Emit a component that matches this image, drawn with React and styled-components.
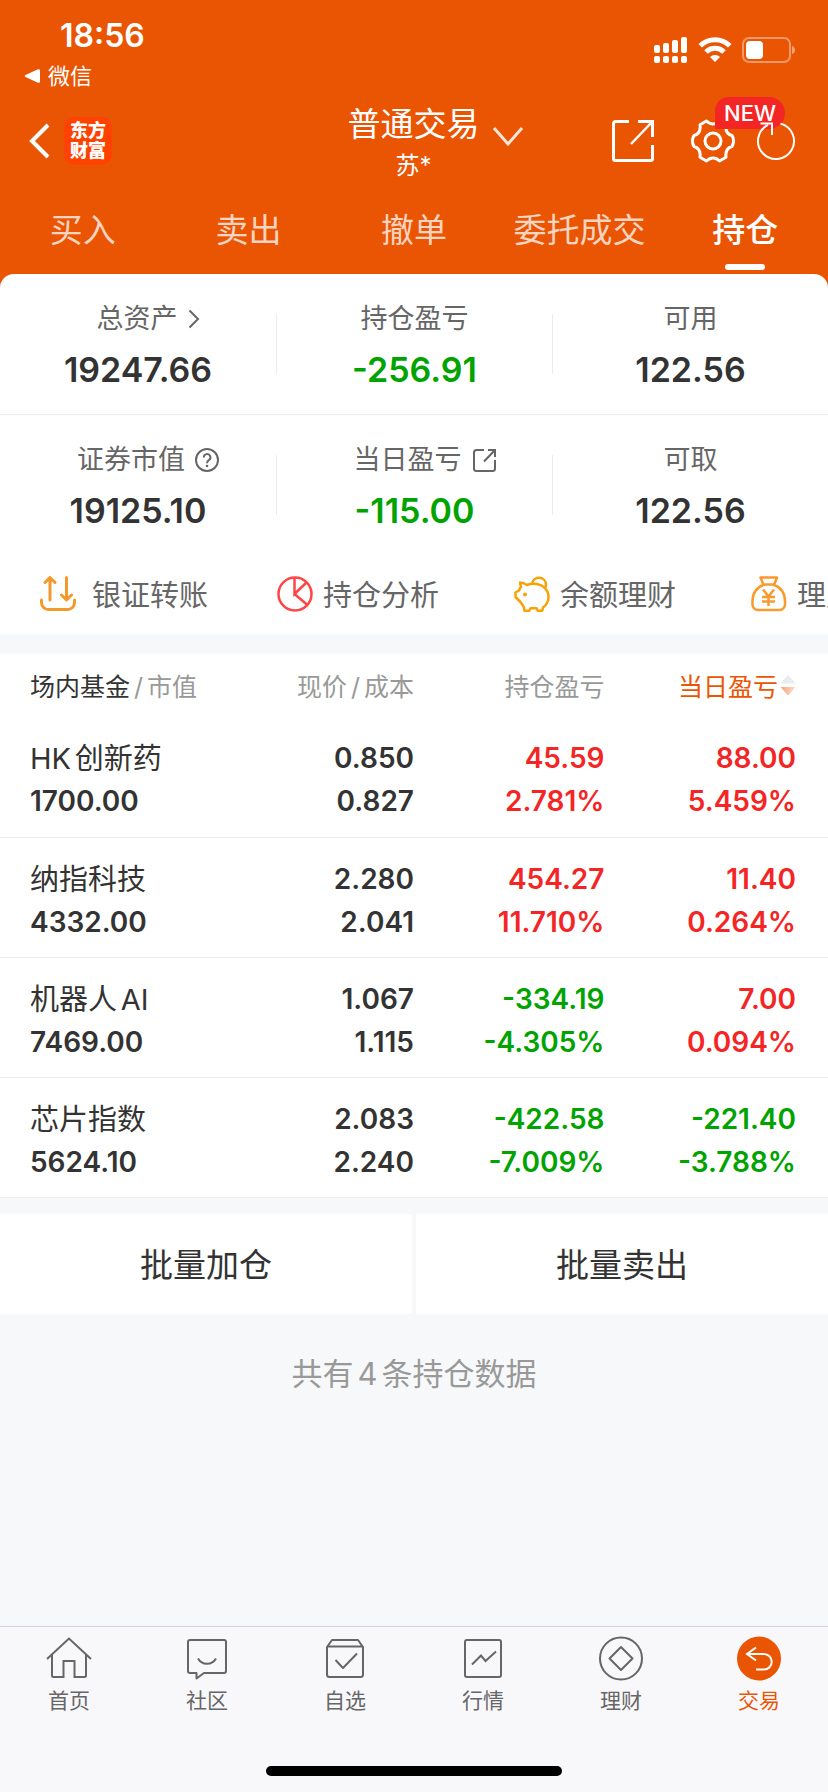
import React, { useState } from "react";
import styled, { createGlobalStyle } from "styled-components";

const GlobalStyle = createGlobalStyle`
  * {
    box-sizing: border-box;
  }
  body {
    margin: 0;
    background: #f7f8fa;
    color: #333;
    font-family: Inter, "Noto Sans CJK SC", sans-serif;
    text-autospace: normal;
  }
  button {
    padding: 0;
    border: 0;
    background: none;
    color: inherit;
    font: inherit;
    cursor: pointer;
  }
  a {
    color: inherit;
    text-decoration: none;
  }
  svg {
    display: block;
    flex: none;
  }
`;

const RED = "#f42525";
const GREEN = "#00a300";
const ORANGE = "#ea5504";

const toneColor = ($tone) =>
  $tone === "up" ? RED : $tone === "down" ? GREEN : "#333";

const Page = styled.div`
  min-height: 100vh;
  display: flex;
  flex-direction: column;
  overflow-x: hidden;
`;

const Header = styled.header`
  background: ${ORANGE};
  color: #fff;
`;

const StatusBar = styled.div`
  height: 96px;
  padding: 16px 32px 0 24px;
  display: flex;
  justify-content: space-between;
`;

const Clock = styled.div`
  padding-left: 36px;
  font-size: 32px;
  line-height: 40px;
  font-weight: 600;
`;

const BackToApp = styled.a`
  display: flex;
  align-items: center;
  gap: 8px;
  font-size: 22px;
  line-height: 40px;
`;

const StatusIcons = styled.div`
  height: 68px;
  display: flex;
  align-items: center;
  gap: 10px;
`;

const NavBar = styled.div`
  height: 90px;
  padding: 0 32px 0 28px;
  display: grid;
  grid-template-columns: 1fr auto 1fr;
  align-items: center;
`;

const NavLeft = styled.div`
  display: flex;
  align-items: center;
  gap: 14px;
`;

const Logo = styled.div`
  width: 48px;
  height: 48px;
  border-radius: 10px;
  background: #ff4200;
  display: grid;
  place-content: center;
  font-size: 18px;
  line-height: 20px;
  font-weight: 900;
`;

const Account = styled.button`
  padding: 6px 0 0 47px;
  display: flex;
  align-items: center;
  gap: 12px;

  svg {
    margin-bottom: 14px;
  }
`;

const AccountText = styled.span`
  display: flex;
  flex-direction: column;
  align-items: center;
`;

const AccountTitle = styled.span`
  font-size: 33px;
  line-height: 44px;
`;

const AccountUser = styled.span`
  font-size: 24px;
  line-height: 40px;
`;

const NavRight = styled.div`
  display: flex;
  align-items: center;
  justify-content: flex-end;
`;

const IconButton = styled.button`
  position: relative;
  margin-left: ${(p) => p.$gap || 0}px;
`;

const NewBadge = styled.span`
  position: absolute;
  left: 24px;
  top: -22px;
  height: 32px;
  padding: 0 9px;
  border-radius: 14px 16px 16px 0;
  background: ${RED};
  font-size: 22px;
  line-height: 32px;
  font-weight: 500;
`;

const Tabs = styled.nav`
  height: 88px;
  display: grid;
  grid-template-columns: repeat(5, 1fr);
`;

const Tab = styled.a`
  padding: 20px 0 4px;
  display: flex;
  flex-direction: column;
  align-items: center;
  justify-content: space-between;
  font-size: 33px;
  line-height: 48px;
  font-weight: ${(p) => (p.$active ? 500 : 400)};
  color: ${(p) => (p.$active ? "#fff" : "rgba(255, 255, 255, 0.75)")};

  &::after {
    content: "";
    width: 40px;
    height: 6px;
    border-radius: 3px;
    background: ${(p) => (p.$active ? "#fff" : "transparent")};
  }
`;

const SummaryWrap = styled.div`
  background: ${ORANGE};
`;

const Summary = styled.section`
  border-radius: 14px 14px 0 0;
  background: #fff;
  overflow: hidden;
`;

const StatRow = styled.div`
  height: 140px;
  display: grid;
  grid-template-columns: repeat(3, 1fr);
  align-items: center;

  & + & {
    border-top: 1px solid #ebebeb;
  }
`;

const Stat = styled.div`
  height: 60px;
  padding-top: 2px;
  display: flex;
  flex-direction: column;
  align-items: center;
  justify-content: center;
  border-left: 1px solid #ececec;

  &:first-child {
    border-left: 0;
  }
`;

const StatLabel = styled.div`
  padding-left: ${(p) => (p.$hasIcon ? 20 : 0)}px;
  display: flex;
  align-items: center;
  gap: 10px;
  font-size: 27px;
  line-height: 50px;
  color: #666;
`;

const StatValue = styled.div`
  font-size: 34px;
  line-height: 52px;
  font-weight: 600;
  color: ${(p) => toneColor(p.$tone)};
`;

const Shortcuts = styled.nav`
  height: 80px;
  padding-left: 40px;
  display: flex;
  gap: 69px;
  overflow: hidden;
`;

const Shortcut = styled.a`
  min-width: 168px;
  display: flex;
  align-items: center;
  gap: 10px;
  font-size: 29px;
  color: #666;
  white-space: nowrap;
`;

const ShortcutLabel = styled.span`
  padding-bottom: 2px;
`;

const Holdings = styled.section`
  margin-top: 20px;
  background: #fff;
`;

const HoldingTable = styled.table`
  width: 100%;
  table-layout: fixed;
  border-collapse: collapse;
  text-align: right;

  th:first-child,
  td:first-child {
    width: 30%;
    padding-left: 30px;
    text-align: left;
  }
  th:nth-child(2) {
    width: 20%;
  }
  th:nth-child(3) {
    width: 23%;
  }
  th:last-child,
  td:last-child {
    width: 27%;
    padding-right: 32px;
  }
`;

const HeadCell = styled.th`
  height: 63px;
  padding: 0 0 2px;
  font-size: 25px;
  font-weight: 400;
  color: #999;
  white-space: nowrap;
`;

const Strong = styled.span`
  color: #333;
`;

const Slash = styled.span`
  padding: 0 4px;
`;

const SortButton = styled.button`
  display: inline-flex;
  align-items: center;
  gap: 2px;
  color: ${ORANGE};
`;

const HoldingRow = styled.tr`
  border-bottom: 1px solid #ebebeb;
`;

const Cell = styled.td`
  height: 120px;
  padding: 7px 0 0;
  font-size: 28px;
  line-height: 43px;
  font-weight: 600;
  color: ${(p) => toneColor(p.$tone)};
  white-space: nowrap;
`;

const Line = styled.div`
  height: 43px;
`;

const FundName = styled(Line)`
  font-size: 29px;
  font-weight: 400;
`;

const BatchActions = styled.div`
  margin-top: 16px;
  display: grid;
  grid-template-columns: 1fr 1fr;
  gap: 4px;
`;

const BatchButton = styled.button`
  && {
    height: 100px;
    padding-bottom: 2px;
    background: #fff;
    font-size: 33px;
  }
`;

const CountNote = styled.p`
  margin: 36px 0;
  text-align: center;
  font-size: 31px;
  line-height: 48px;
  color: #999;
`;

const BottomBar = styled.footer`
  height: 166px;
  margin-top: auto;
  padding-bottom: 16px;
  display: flex;
  flex-direction: column;
  align-items: center;
  justify-content: space-between;
  border-top: 1px solid #d5d6d9;
  background: #f8f8fb;
`;

const BottomNav = styled.nav`
  width: 100%;
  display: grid;
  grid-template-columns: repeat(6, 1fr);
`;

const BottomLink = styled.a`
  padding-top: 9px;
  display: flex;
  flex-direction: column;
  align-items: center;
  gap: 3px;
  font-size: 21px;
  line-height: 32px;
  color: ${(p) => (p.$active ? ORANGE : "#666")};
`;

const HomeIndicator = styled.div`
  width: 296px;
  height: 10px;
  border-radius: 5px;
  background: #000;
`;

const Icon = ({ w, h, sw = 2, children, ...rest }) => (
  <svg
    width={w}
    height={h}
    viewBox={`0 0 ${w} ${h}`}
    fill="none"
    stroke="currentColor"
    strokeWidth={sw}
    aria-hidden="true"
    {...rest}
  >
    {children}
  </svg>
);

const SignalIcon = () => (
  <Icon w={34} h={26} fill="#fff" stroke="none">
    {[0, 9, 18, 27].map((x, i) => (
      <g key={x}>
        <rect x={x} y={[8, 6, 3, 0][i]} width="6" height={[8, 10, 13, 16][i]} rx="2" />
        <rect x={x} y="19" width="6" height="7" rx="2" />
      </g>
    ))}
  </Icon>
);

const WifiIcon = () => (
  <Icon w={34} h={26} sw={5}>
    <path d="M2.2 8.8a21 21 0 0 1 29.6 0" />
    <path d="M8 15a12.8 12.8 0 0 1 18 0" />
    <path d="M17 25l-5-5a7.3 7.3 0 0 1 10 0z" fill="#fff" stroke="none" />
  </Icon>
);

const BatteryIcon = () => (
  <Icon w={54} h={26}>
    <rect x="1" y="1" width="47" height="24" rx="6" opacity="0.4" />
    <rect x="4" y="4" width="17" height="18" rx="4" fill="#fff" stroke="none" />
    <path d="M50 9c4 1 4 7 0 8z" fill="#fff" stroke="none" opacity="0.45" />
  </Icon>
);

const ShareIcon = () => (
  <Icon w={44} h={44} sw={3}>
    <path d="M18 2.500H4.500a2 2 0 0 0-2 2v35a2 2 0 0 0 2 2h35a2 2 0 0 0 2-2V26" />
    <path d="M27 2.500h14.500V18" />
    <path d="M41 3L20 25" strokeWidth="2.500" />
  </Icon>
);

const GearIcon = () => (
  <Icon w={44} h={44} sw={3}>
    <path
      strokeLinejoin="round"
      d="M15.500 2c4 4 9 4 13 0l6.500 3.700c-.8 6 1.300 9.600 6 10.800 2 3.500 2 7.500 0 11-4.700 1.200-6.800 4.800-6 10.800L28.500 42c-4-4-9-4-13 0L9 38.300c.8-6-1.300-9.600-6-10.800-2-3.500-2-7.500 0-11 4.700-1.200 6.800-4.800 6-10.800z"
    />
    <circle cx="22" cy="22" r="8" />
  </Icon>
);

const RefreshIcon = () => (
  <Icon w={40} h={40} sw={2}>
    <path d="M24.500 2.600A18 18 0 1 1 12 3.900" />
    <path d="M4.500 2.500H16V14" />
  </Icon>
);

const TransferIcon = () => (
  <Icon w={42} h={36} sw={3} stroke="#f39a2d" strokeLinecap="round" strokeLinejoin="round">
    <path d="M1.500 24v2.500a7 7 0 0 0 7 7h19a7 7 0 0 0 7-7V24" />
    <path d="M10 24V2M5 6.500l5-5 5 5M26.500 1.500v22M21.500 19l5 5 5-5" />
  </Icon>
);

const PieIcon = () => (
  <Icon w={36} h={36} stroke="#ff4646" sw={2.5}>
    <circle cx="18" cy="18" r="16.500" />
    <path d="M17.500 1.500V18l12-11.500M17.500 18l13 11" />
  </Icon>
);

const PiggyIcon = () => (
  <Icon w={36} h={36} stroke="#f8a206" sw={2.5} strokeLinejoin="round">
    <path d="M6 6.500c3 0 5 1 7 2.500 3-1.200 7-1.500 10-1 7 1.500 11.500 6.500 11.500 13 0 5-2 8-5.500 10.500l-.8 3.200h-4.400l-1.300-2.500h-6l-1.200 2.500H10.500l-.8-4C8.500 29 7.500 27.500 6.500 26L1.500 21v-4.500l3.500-2C5.500 13 6 12 7 11z" />
    <path d="M18.200 7A7 6.800 0 0 1 32 8.500c0 1.500-.3 2.500-1 3.500" />
    <circle cx="11" cy="18.500" r="2" fill="#f8a206" stroke="none" />
  </Icon>
);

const BagIcon = () => (
  <Icon w={36} h={36} stroke="#f89a2d" sw={2.5} strokeLinejoin="round">
    <path d="M9.500 1.500h16.500l-3 7.500c7 2 11 8.500 11 16v3.500a5.500 5.500 0 0 1-5.500 5.500h-21.500a5.500 5.500 0 0 1-5.500-5.500V25c0-7.500 4-14 11-16z" />
    <path d="M12 8.500h12" />
    <path d="M12 13.500l5.500 7 5.500-7M17.500 20.500V30M11 21h13M11 25.500h13" />
  </Icon>
);

const ChevronLeft = () => (
  <Icon w={22} h={36} sw={4}>
    <path d="M20 2L4 18l16 16" />
  </Icon>
);

const ChevronDown = () => (
  <Icon w={32} h={22} sw={3} opacity="0.85">
    <path d="M2 2l14 16L30 2" />
  </Icon>
);

const ChevronRight = () => (
  <Icon w={12} h={20}>
    <path d="M1.500 1.500L10 10l-8.500 8.500" />
  </Icon>
);

const HelpIcon = () => (
  <Icon w={24} h={24}>
    <circle cx="12" cy="12" r="11" />
    <path d="M8.800 9.500a3.300 3.300 0 1 1 5 2.700c-1.300.8-1.800 1.500-1.800 3" />
    <circle cx="12" cy="18" r="1.300" fill="currentColor" stroke="none" />
  </Icon>
);

const OpenIcon = () => (
  <Icon w={24} h={24}>
    <path d="M12 2H4.500A2.500 2.500 0 0 0 2 4.500v16A2.500 2.500 0 0 0 4.500 23h16a2.500 2.500 0 0 0 2.500-2.500V12" />
    <path d="M16 2h7v7M22.500 2.500L12 13.500" />
  </Icon>
);

const SortIcon = () => (
  <Icon w={16} h={22} stroke="none">
    <defs>
      <linearGradient id="sortDown" x1="0" y1="0" x2="1" y2="0">
        <stop offset="0" stopColor="#f5a57c" />
        <stop offset="1" stopColor="#fbdccb" />
      </linearGradient>
    </defs>
    <path d="M8 1l7.500 8.500H.5z" fill="#e9ebee" />
    <path d="M8 21.500L.5 13h15z" fill="url(#sortDown)" />
  </Icon>
);

const HomeIcon = () => (
  <Icon w={46} h={46}>
    <path d="M1 23L23 2.500 45 23" />
    <path d="M6 19v20.500a1.500 1.500 0 0 0 1.500 1.500h10V25h11v16h10a1.500 1.500 0 0 0 1.500-1.500V19" />
  </Icon>
);

const ChatIcon = () => (
  <Icon w={46} h={46} strokeLinejoin="round">
    <path d="M6 4h34a2 2 0 0 1 2 2v29a2 2 0 0 1-2 2H20l-7.500 5.500V37H6a2 2 0 0 1-2-2V6a2 2 0 0 1 2-2z" />
    <path d="M14 22.500c4 7 14 7 18 0" />
  </Icon>
);

const BoxCheckIcon = () => (
  <Icon w={46} h={46} strokeLinejoin="round">
    <path d="M5 11l5-7h26l5 7v27.500a2.500 2.500 0 0 1-2.500 2.500h-31A2.500 2.500 0 0 1 5 38.500zM5 10.500h36" />
    <path d="M13.500 24l7.500 8 14-14.500" />
  </Icon>
);

const MarketIcon = () => (
  <Icon w={46} h={46}>
    <rect x="5" y="4" width="36" height="37" rx="2" />
    <path d="M12 28.500l9-9 4.500 5.500L36 15.500" />
  </Icon>
);

const WealthIcon = () => (
  <Icon w={46} h={46}>
    <circle cx="23" cy="22.500" r="21" />
    <path d="M23 11l11.500 11.500L23 34 11.500 22.500z" strokeLinejoin="round" />
  </Icon>
);

const TradeIcon = () => (
  <Icon w={46} h={46}>
    <circle cx="23" cy="22.500" r="22" fill={ORANGE} stroke="none" />
    <path d="M20 11.500L11 18l9 6.500M11 18h17a7.500 7.500 0 0 1 0 15.500h-8" stroke="#fff" />
  </Icon>
);

const tabs = ["买入", "卖出", "撤单", "委托成交", "持仓"];

const stats = [
  [
    { label: "总资产", value: "19247.66", icon: <ChevronRight /> },
    { label: "持仓盈亏", value: "-256.91", tone: "down" },
    { label: "可用", value: "122.56" },
  ],
  [
    { label: "证券市值", value: "19125.10", icon: <HelpIcon /> },
    { label: "当日盈亏", value: "-115.00", tone: "down", icon: <OpenIcon /> },
    { label: "可取", value: "122.56" },
  ],
];

const shortcuts = [
  { label: "银证转账", icon: <TransferIcon /> },
  { label: "持仓分析", icon: <PieIcon /> },
  { label: "余额理财", icon: <PiggyIcon /> },
  { label: "理财", icon: <BagIcon /> },
];

const holdings = [
  { name: "HK创新药", amount: "1700.00", price: "0.850", cost: "0.827", total: ["45.59", "2.781%"], day: ["88.00", "5.459%"] },
  { name: "纳指科技", amount: "4332.00", price: "2.280", cost: "2.041", total: ["454.27", "11.710%"], day: ["11.40", "0.264%"] },
  { name: "机器人AI", amount: "7469.00", price: "1.067", cost: "1.115", total: ["-334.19", "-4.305%"], day: ["7.00", "0.094%"] },
  { name: "芯片指数", amount: "5624.10", price: "2.083", cost: "2.240", total: ["-422.58", "-7.009%"], day: ["-221.40", "-3.788%"] },
];

const bottomLinks = [
  { label: "首页", icon: <HomeIcon /> },
  { label: "社区", icon: <ChatIcon /> },
  { label: "自选", icon: <BoxCheckIcon /> },
  { label: "行情", icon: <MarketIcon /> },
  { label: "理财", icon: <WealthIcon /> },
  { label: "交易", icon: <TradeIcon /> },
];

const toneOf = (text) => (text.startsWith("-") ? "down" : "up");

function ProfitCell({ values }) {
  return (
    <Cell $tone={toneOf(values[0])}>
      <Line>{values[0]}</Line>
      <Line>{values[1]}</Line>
    </Cell>
  );
}

export default function App() {
  const [tab, setTab] = useState("持仓");

  return (
    <Page>
      <GlobalStyle />
      <Header>
        <StatusBar>
          <div>
            <Clock>18:56</Clock>
            <BackToApp href="#wechat">
              <Icon w={16} h={14} fill="#fff" stroke="none">
                <path d="M1.500 6L14 .3q2-.6 2 1.200v11q0 1.800-2 1.200L1.500 8q-1.500-1 0-2z" />
              </Icon>
              微信
            </BackToApp>
          </div>
          <StatusIcons>
            <SignalIcon />
            <WifiIcon />
            <BatteryIcon />
          </StatusIcons>
        </StatusBar>
        <NavBar>
          <NavLeft>
            <IconButton aria-label="返回">
              <ChevronLeft />
            </IconButton>
            <Logo>
              <span>东方</span>
              <span>财富</span>
            </Logo>
          </NavLeft>
          <Account>
            <AccountText>
              <AccountTitle>普通交易</AccountTitle>
              <AccountUser>苏*</AccountUser>
            </AccountText>
            <ChevronDown />
          </Account>
          <NavRight>
            <IconButton aria-label="分享">
              <ShareIcon />
            </IconButton>
            <IconButton aria-label="设置" $gap={36}>
              <GearIcon />
              <NewBadge>NEW</NewBadge>
            </IconButton>
            <IconButton aria-label="刷新" $gap={21}>
              <RefreshIcon />
            </IconButton>
          </NavRight>
        </NavBar>
        <Tabs>
          {tabs.map((name) => (
            <Tab
              key={name}
              href={`#${name}`}
              $active={name === tab}
              onClick={() => setTab(name)}
            >
              {name}
            </Tab>
          ))}
        </Tabs>
      </Header>

      <SummaryWrap>
        <Summary>
          {stats.map((row, i) => (
            <StatRow key={i}>
              {row.map((s) => (
                <Stat key={s.label}>
                  <StatLabel $hasIcon={!!s.icon}>
                    {s.label}
                    {s.icon}
                  </StatLabel>
                  <StatValue $tone={s.tone}>{s.value}</StatValue>
                </Stat>
              ))}
            </StatRow>
          ))}
          <Shortcuts>
            {shortcuts.map((s) => (
              <Shortcut key={s.label} href={`#${s.label}`}>
                {s.icon}
                <ShortcutLabel>{s.label}</ShortcutLabel>
              </Shortcut>
            ))}
          </Shortcuts>
        </Summary>
      </SummaryWrap>

      <Holdings>
        <HoldingTable>
          <thead>
            <tr>
              <HeadCell>
                <Strong>场内基金</Strong>
                <Slash>/</Slash>市值
              </HeadCell>
              <HeadCell>
                现价<Slash>/</Slash>成本
              </HeadCell>
              <HeadCell>持仓盈亏</HeadCell>
              <HeadCell>
                <SortButton>
                  当日盈亏
                  <SortIcon />
                </SortButton>
              </HeadCell>
            </tr>
          </thead>
          <tbody>
            {holdings.map((h) => (
              <HoldingRow key={h.name}>
                <Cell>
                  <FundName>{h.name}</FundName>
                  <Line>{h.amount}</Line>
                </Cell>
                <Cell>
                  <Line>{h.price}</Line>
                  <Line>{h.cost}</Line>
                </Cell>
                <ProfitCell values={h.total} />
                <ProfitCell values={h.day} />
              </HoldingRow>
            ))}
          </tbody>
        </HoldingTable>
      </Holdings>

      <BatchActions>
        <BatchButton>批量加仓</BatchButton>
        <BatchButton>批量卖出</BatchButton>
      </BatchActions>
      <CountNote>共有4条持仓数据</CountNote>

      <BottomBar>
        <BottomNav>
          {bottomLinks.map((l) => (
            <BottomLink key={l.label} href={`#${l.label}`} $active={l.label === "交易"}>
              {l.icon}
              {l.label}
            </BottomLink>
          ))}
        </BottomNav>
        <HomeIndicator />
      </BottomBar>
    </Page>
  );
}
